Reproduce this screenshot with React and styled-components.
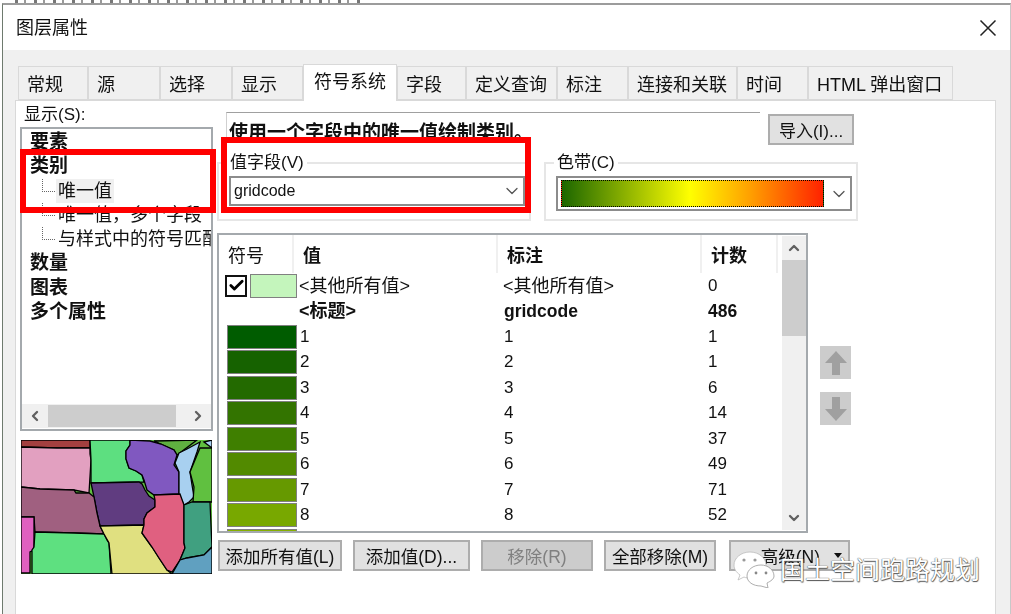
import styled, { createGlobalStyle } from 'styled-components';
import { ChevronDown, ChevronLeft, ChevronRight, ChevronUp, Check } from 'lucide-react';

const tabs = ['常规', '源', '选择', '显示', '符号系统', '字段', '定义查询', '标注', '连接和关联', '时间', 'HTML 弹出窗口'];
const tabWidths = [70, 72, 72, 71, 94, 69, 91, 71, 109, 71, 145];

const rows = [
  { value: '1', label: '1', count: '1', color: '#005c00' },
  { value: '2', label: '2', count: '1', color: '#166200' },
  { value: '3', label: '3', count: '6', color: '#236a00' },
  { value: '4', label: '4', count: '14', color: '#337400' },
  { value: '5', label: '5', count: '37', color: '#3f7f00' },
  { value: '6', label: '6', count: '49', color: '#528a00' },
  { value: '7', label: '7', count: '71', color: '#669900' },
  { value: '8', label: '8', count: '52', color: '#78a800' },
  { value: '', label: '', count: '', color: '#86b000' },
];

const regions = [
  ['#a34040', '0,0 69,0 69,8 36,8 0,7'],
  ['#e2a0c0', '0,7 36,8 69,8 69,14 70,20 68,53 53,50 19,49 0,47'],
  ['#5ddf80', '69,0 109,0 109,5 105,11 105,19 108,28 115,31 121,35 123,42 70,43 70,20'],
  ['#5fb040', '133,1 176,0 156,15 153,10'],
  ['#8058c0', '109,0 129,1 140,4 153,10 156,15 153,25 158,32 158,54 133,55 126,50 123,40 121,35 115,31 108,28 105,19 105,11 109,5'],
  ['#a8d0f0', '158,13 166,9 179,2 176,12 169,32 171,45 173,57 168,62 163,65 158,54 158,32 154,23'],
  ['#a8d0f0', '183,2 191,0 191,8'],
  ['#60c040', '179,8 191,8 191,62 172,62 173,47 169,32'],
  ['#603c80', '70,43 118,42 121,44 124,50 128,56 134,60 134,67 126,73 123,79 123,85 79,86 76,73 73,57'],
  ['#a06080', '0,47 19,49 53,50 55,53 68,53 73,57 76,73 79,86 83,94 53,93 14,92 13,77 0,77'],
  ['#e060c0', '0,77 13,77 13,110 9,112 9,133 0,133'],
  ['#5ee080', '14,92 53,93 83,94 86,100 88,103 90,134 11,134 11,110 13,107'],
  ['#e0e080', '79,86 123,85 121,93 131,107 138,118 146,130 151,134 91,134 88,103 83,94'],
  ['#e06080', '133,55 159,54 163,65 163,103 164,108 159,120 151,132 146,130 138,118 131,107 121,93 123,85 123,79 126,73 134,67 134,60'],
  ['#40a080', '163,65 171,62 189,62 191,107 183,115 166,118 159,120 164,108 163,103'],
  ['#60a0c0', '159,120 166,118 183,115 191,107 191,134 151,134'],
];

const App = () => {
  return (
    <>
      <GlobalStyle />
      <Page>
        <BehindStrip />
        <Window>
          <TitleBar>
            <Title>图层属性</Title>
            <svg width="18" height="18" viewBox="0 0 18 18">
              <path d="M1.5 1.5 L16.5 16.5 M16.5 1.5 L1.5 16.5" stroke="#222" strokeWidth="1.5" fill="none" />
            </svg>
          </TitleBar>
          <Body>
            <Tabs>
              {tabs.map((tab, i) => (
                <Tab key={tab} $active={tab === '符号系统'} style={{ width: tabWidths[i] }}>
                  {tab}
                </Tab>
              ))}
            </Tabs>
            <Panel>
              <LeftColumn>
                <ShowLabel>显示(S):</ShowLabel>
                <TreeBox>
                  <TreeList>
                    <TreeGroup>要素</TreeGroup>
                    <TreeGroup>类别</TreeGroup>
                    <TreeChild><Selected>唯一值</Selected></TreeChild>
                    <TreeChild>唯一值，多个字段</TreeChild>
                    <TreeChild>与样式中的符号匹配</TreeChild>
                    <TreeGroup>数量</TreeGroup>
                    <TreeGroup>图表</TreeGroup>
                    <TreeGroup>多个属性</TreeGroup>
                  </TreeList>
                  <HScroll>
                    <ChevronLeft size={16} strokeWidth={3.5} color="#606060" />
                    <HThumb />
                    <ChevronRight size={16} strokeWidth={3.5} color="#606060" />
                  </HScroll>
                </TreeBox>
                <MapPreview viewBox="0 0 191 134" preserveAspectRatio="none">
                  {regions.map(([fill, points]) => (
                    <polygon key={points} points={points} fill={fill} stroke="#000" strokeWidth="1.3" />
                  ))}
                </MapPreview>
              </LeftColumn>

              <RightColumn>
                <TopRow>
                  <Description>使用一个字段中的唯一值绘制类别。</Description>
                  <ImportButton>导入(I)...</ImportButton>
                </TopRow>
                <GroupRow>
                  <Group>
                    <Legend>值字段(V)</Legend>
                    <Combo $height={30}>
                      <span>gridcode</span>
                      <ChevronDown size={20} strokeWidth={1.5} color="#555" />
                    </Combo>
                  </Group>
                  <Group>
                    <Legend>色带(C)</Legend>
                    <Combo $height={35}>
                      <Ramp />
                      <ChevronDown size={20} strokeWidth={1.5} color="#555" />
                    </Combo>
                  </Group>
                </GroupRow>
                <TableRow>
                  <Table>
                    <TableBody>
                      <HeaderRow>
                        <HeaderCell $light>符号</HeaderCell>
                        <HeaderCell>值</HeaderCell>
                        <HeaderCell>标注</HeaderCell>
                        <HeaderCell>计数</HeaderCell>
                      </HeaderRow>
                      <Row>
                        <SymbolCell>
                          <CheckBox><Check size={17} strokeWidth={4} color="#000" /></CheckBox>
                          <Swatch $color="#c4f5bc" $small />
                        </SymbolCell>
                        <Cell $cjk>&lt;其他所有值&gt;</Cell>
                        <Cell $cjk>&lt;其他所有值&gt;</Cell>
                        <Cell>0</Cell>
                      </Row>
                      <Row>
                        <SymbolCell />
                        <Cell $cjk $bold>&lt;标题&gt;</Cell>
                        <Cell $bold>gridcode</Cell>
                        <Cell $bold>486</Cell>
                      </Row>
                      {rows.map((row) => (
                        <Row key={row.color}>
                          <SymbolCell><Swatch $color={row.color} /></SymbolCell>
                          <Cell>{row.value}</Cell>
                          <Cell>{row.label}</Cell>
                          <Cell>{row.count}</Cell>
                        </Row>
                      ))}
                    </TableBody>
                    <VScroll>
                      <ChevronUp size={16} strokeWidth={3.5} color="#606060" />
                      <VThumb />
                      <VSpacer />
                      <ChevronDown size={16} strokeWidth={3.5} color="#606060" />
                    </VScroll>
                  </Table>
                  <MoveButtons>
                    <MoveButton>
                      <svg width="24" height="26" viewBox="0 0 24 26">
                        <path d="M12 1 L23 13 H16 V25 H8 V13 H1 Z" fill="#a0a0a0" />
                      </svg>
                    </MoveButton>
                    <MoveButton>
                      <svg width="24" height="26" viewBox="0 0 24 26">
                        <path d="M12 25 L23 13 H16 V1 H8 V13 H1 Z" fill="#a0a0a0" />
                      </svg>
                    </MoveButton>
                  </MoveButtons>
                </TableRow>
                <ButtonRow>
                  <ActionButton $width={124}>添加所有值(L)</ActionButton>
                  <ActionButton $width={117}>添加值(D)...</ActionButton>
                  <ActionButton $width={112} $disabled>移除(R)</ActionButton>
                  <ActionButton $width={112}>全部移除(M)</ActionButton>
                  <AdvancedButton>
                    <span>高级(N)</span>
                    <Caret />
                  </AdvancedButton>
                </ButtonRow>
              </RightColumn>
            </Panel>
          </Body>
        </Window>

        <RedBox $x={20} $y={149} $w={196} $h={64} />
        <RedBox $x={221} $y={137} $w={310} $h={76} />

        <Watermark>
          <svg width="42" height="38" viewBox="0 0 42 38">
            <path
              d="M17 2 C8 2 1 8 1 15 C1 19 3 22 7 25 L5 30 L11 27 C13 28 15 28 17 28 C26 28 33 22 33 15 C33 8 26 2 17 2 Z"
              fill="#fff" stroke="#bbb" strokeWidth="0.8"
            />
            <path
              d="M28 15 C20 15 14 20 14 26 C14 32 20 36 28 36 L35 38 L34 33 C38 31 41 29 41 26 C41 20 35 15 28 15 Z"
              fill="#fff" stroke="#999" strokeWidth="0.8"
            />
            <circle cx="11" cy="10" r="1.6" fill="#999" />
            <circle cx="22" cy="10" r="1.6" fill="#999" />
            <circle cx="23" cy="23" r="1.4" fill="#888" />
            <circle cx="33" cy="23" r="1.4" fill="#888" />
          </svg>
          <WatermarkText>国土空间跑路规划</WatermarkText>
        </Watermark>
      </Page>
    </>
  );
};

const fontStack = `"Liberation Sans", "Noto Sans CJK SC", sans-serif`;

const GlobalStyle = createGlobalStyle`
  html, body {
    margin: 0;
    padding: 0;
    background: #fff;
  }
`;
const Page = styled.div`
  position: relative;
  width: 1011px;
  height: 614px;
  overflow: hidden;
  padding: 3px 0 0 2px;
  box-sizing: border-box;
  font-family: ${fontStack};
  color: #111;
  background: #fff;
`;
/* bits of the page behind the dialog, showing above its top edge */
const BehindStrip = styled.div`
  position: absolute;
  left: 15px;
  top: 0;
  width: 350px;
  height: 3px;
  background: repeating-linear-gradient(90deg, #777 0 3px, #fff 3px 9px, #999 9px 11px, #fff 11px 19px);
`;
const Window = styled.div`
  height: 100%;
  display: flex;
  flex-direction: column;
  border-top: 2px solid #9c9c9c;
  border-left: 1px solid #6e7a6e;
  border-right: 1px solid #c8c8c8;
  filter: blur(0.4px);
`;
const TitleBar = styled.div`
  height: 45px;
  flex: none;
  display: flex;
  align-items: center;
  justify-content: space-between;
  padding: 0 13px 0 13px;
  background: #fff;
`;
const Title = styled.div`
  font-size: 18px;
  margin-top: -3px;
`;
const Body = styled.div`
  flex: 1;
  min-height: 0;
  display: flex;
  flex-direction: column;
  background: #f0f0f0;
  padding: 14px 14px 0 12px;
`;
const Tabs = styled.div`
  height: 36px;
  flex: none;
  display: flex;
  align-items: flex-end;
  padding-left: 3px;
`;
const Tab = styled.div`
  box-sizing: border-box;
  height: ${(p) => (p.$active ? '37px' : '34px')};
  margin-bottom: ${(p) => (p.$active ? '-1px' : '0')};
  padding: ${(p) => (p.$active ? '0 0 6px 10px' : '0 0 0 8px')};
  display: flex;
  align-items: center;
  font-size: 18px;
  white-space: nowrap;
  background: ${(p) => (p.$active ? '#fff' : '#f0f0f0')};
  border: 1px solid #d9d9d9;
  border-bottom: ${(p) => (p.$active ? 'none' : '1px solid #d9d9d9')};
  position: relative;
  z-index: ${(p) => (p.$active ? 1 : 0)};
`;
const Panel = styled.div`
  flex: 1;
  min-height: 0;
  display: flex;
  gap: 4px;
  background: #fff;
  border: 1px solid #d9d9d9;
  border-bottom: none;
  padding-left: 4px;
`;
const LeftColumn = styled.div`
  width: 193px;
  flex: none;
  display: flex;
  flex-direction: column;
`;
const ShowLabel = styled.div`
  height: 26px;
  padding: 4px 0 0 4px;
  box-sizing: border-box;
  font-size: 17px;
  line-height: 20px;
`;
const TreeBox = styled.div`
  box-sizing: border-box;
  height: 304px;
  display: flex;
  flex-direction: column;
  border: 2px solid #a4a9ad;
  background: #fff;
`;
const TreeList = styled.div`
  flex: 1;
  min-height: 0;
  overflow: hidden;
  padding-top: 1px;
`;
const TreeGroup = styled.div`
  height: 24.3px;
  line-height: 24px;
  padding-left: 8px;
  font-size: 19px;
  font-weight: 700;
  white-space: nowrap;
`;
const TreeChild = styled.div`
  position: relative;
  height: 24.3px;
  line-height: 24px;
  padding-left: 36px;
  font-size: 18px;
  white-space: nowrap;

  &::before {
    content: '';
    position: absolute;
    left: 20px;
    top: 0;
    width: 12px;
    height: 12px;
    border-left: 1px dotted #666;
    border-bottom: 1px dotted #666;
  }
`;
const Selected = styled.span`
  display: inline-block;
  background: #f0f0f0;
  padding: 0 2px;
  margin-left: -2px;
`;
const HScroll = styled.div`
  height: 24px;
  flex: none;
  display: flex;
  align-items: center;
  gap: 5px;
  background: #f0f0f0;
  padding: 0 5px;
  margin-bottom: 1px;
`;
const HThumb = styled.div`
  width: 128px;
  height: 22px;
  margin-right: auto;
  background: #cdcdcd;
`;
const MapPreview = styled.svg`
  display: block;
  width: 191px;
  height: 134px;
  margin: 9px 0 0 1px;
  background: #60c040;
`;
const RightColumn = styled.div`
  flex: 1;
  min-width: 0;
  display: flex;
  flex-direction: column;
  padding-top: 11px;
`;
const TopRow = styled.div`
  height: 34px;
  flex: none;
  display: flex;
  align-items: flex-start;
  padding-left: 9px;
`;
const Description = styled.div`
  box-sizing: border-box;
  width: 534px;
  height: 34px;
  padding: 9px 0 0 2px;
  border-top: 1px solid #a0a0a0;
  border-left: 1px solid #d0d0d0;
  font-size: 19px;
  line-height: 22px;
  font-weight: 700;
  white-space: nowrap;
  overflow: hidden;
`;
const ImportButton = styled.div`
  box-sizing: border-box;
  width: 86px;
  height: 31px;
  margin: 2px 0 0 8px;
  display: flex;
  align-items: center;
  justify-content: center;
  background: #e1e1e1;
  border: 2px solid #adadad;
  font-size: 17px;
`;
const GroupRow = styled.div`
  display: flex;
  gap: 13px;
  margin-top: 7px;
  height: 68px;
  flex: none;
`;
const Group = styled.fieldset`
  box-sizing: border-box;
  width: 314px;
  height: 68px;
  margin: 0;
  padding: 3px 4px 0 10px;
  min-width: 0;
  border: 2px solid #e6e6e6;
`;
const Legend = styled.legend`
  padding: 0 3px;
  margin-left: -2px;
  font-size: 17px;
  line-height: 20px;
`;
const Combo = styled.div`
  box-sizing: border-box;
  width: 296px;
  height: ${(p) => p.$height}px;
  display: flex;
  align-items: center;
  justify-content: space-between;
  padding: 0 1px 0 3px;
  border: 2px solid #8c8c8c;
  background: #fff;
  font-size: 16px;
`;
const Ramp = styled.div`
  box-sizing: border-box;
  width: 263px;
  height: 27px;
  border: 1px dotted #000;
  background: linear-gradient(90deg, #1c6600 0%, #ffff00 49%, #ffa000 72%, #ff2200 100%);
`;
const TableRow = styled.div`
  display: flex;
  margin-top: 12px;
  height: 300px;
  flex: none;
`;
const Table = styled.div`
  box-sizing: border-box;
  width: 591px;
  height: 300px;
  display: flex;
  justify-content: space-between;
  border: 2px solid #a4a9ad;
  background: #fff;
  overflow: hidden;
`;
const TableBody = styled.div`
  width: 559px;
  overflow: hidden;
`;
const HeaderRow = styled.div`
  height: 38px;
  display: grid;
  grid-template-columns: 75px 204px 204px 76px;
  align-items: stretch;
`;
const HeaderCell = styled.div`
  display: flex;
  align-items: center;
  padding-left: 9px;
  font-size: 18px;
  font-weight: ${(p) => (p.$light ? 400 : 700)};
  border-right: 2px solid #f0f0f0;
`;
const Row = styled.div`
  height: 25.5px;
  display: grid;
  grid-template-columns: 75px 204px 204px 76px;
  align-items: center;
`;
const SymbolCell = styled.div`
  display: flex;
  align-items: center;
  justify-content: flex-end;
  gap: 3px;
  height: 100%;
  margin-right: -3px;
`;
const Swatch = styled.div`
  box-sizing: border-box;
  width: ${(p) => (p.$small ? '47px' : '70px')};
  height: 24px;
  background: ${(p) => p.$color};
  border: 1.5px solid #808080;
`;
const CheckBox = styled.div`
  box-sizing: border-box;
  width: 22px;
  height: 22px;
  display: flex;
  align-items: center;
  justify-content: center;
  border: 2px solid #111;
  background: #fff;
`;
const Cell = styled.div`
  padding-left: ${(p) => (p.$cjk ? '5px' : '6px')};
  font-size: ${(p) => (p.$cjk ? '18px' : p.$bold ? '17.5px' : '17px')};
  font-weight: ${(p) => (p.$bold ? 700 : 400)};
  line-height: 24px;
  white-space: nowrap;
`;
const VScroll = styled.div`
  width: 24px;
  flex: none;
  margin: 1px 0 1px;
  display: flex;
  flex-direction: column;
  align-items: center;
  background: #f0f0f0;
  padding: 4px 0;
  box-sizing: border-box;
`;
const VThumb = styled.div`
  width: 100%;
  height: 76px;
  margin-top: 4px;
  background: #cdcdcd;
`;
const VSpacer = styled.div`
  flex: 1;
`;
const MoveButtons = styled.div`
  display: flex;
  flex-direction: column;
  gap: 13px;
  margin: 113px 0 0 12px;
`;
const MoveButton = styled.div`
  width: 31px;
  height: 33px;
  display: flex;
  align-items: center;
  justify-content: center;
  background: #cccccc;
`;
const ButtonRow = styled.div`
  display: flex;
  gap: 11px;
  margin: 7px 0 0 1px;
`;
const ActionButton = styled.div`
  box-sizing: border-box;
  width: ${(p) => p.$width}px;
  height: 31px;
  display: flex;
  align-items: center;
  justify-content: center;
  background: ${(p) => (p.$disabled ? '#cccccc' : '#e1e1e1')};
  border: 2px solid #adadad;
  color: ${(p) => (p.$disabled ? '#808080' : '#111')};
  font-size: 17.5px;
  white-space: nowrap;
`;
const AdvancedButton = styled(ActionButton)`
  width: 121px;
  justify-content: flex-end;
  gap: 14px;
  padding-right: 6px;
  margin-left: 2px;
`;
const Caret = styled.div`
  width: 0;
  height: 0;
  border-left: 4px solid transparent;
  border-right: 4px solid transparent;
  border-top: 5px solid #111;
`;
const RedBox = styled.div`
  position: absolute;
  box-sizing: border-box;
  left: ${(p) => p.$x}px;
  top: ${(p) => p.$y}px;
  width: ${(p) => p.$w}px;
  height: ${(p) => p.$h}px;
  border: 6px solid #ff0000;
`;
const Watermark = styled.div`
  position: absolute;
  left: 733px;
  top: 550px;
  display: flex;
  align-items: flex-start;
  gap: 5px;
`;
const WatermarkText = styled.div`
  margin-top: 5px;
  font-size: 25px;
  line-height: 30px;
  color: #fff;
  white-space: nowrap;
  text-shadow: 0 0 1px #555, 0 0 1px #555, 0.5px 0.5px 1px #555;
`;

export default App;
